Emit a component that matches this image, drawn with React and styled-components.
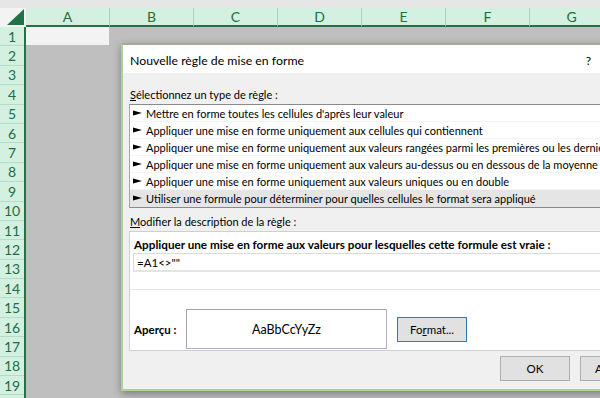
import React from 'react';
import styled, { createGlobalStyle } from 'styled-components';

const GlobalStyle = createGlobalStyle`
    html, body {
        margin: 0;
        padding: 0;
    }
    body {
        width: 600px;
        height: 398px;
        overflow: hidden;
        background: #bfbfbf;
    }
`;

const UI = '"Lato", "Noto Sans", "Liberation Sans", sans-serif';

const Screen = styled.div`
    position: relative;
    width: 600px;
    height: 398px;
    overflow: hidden;
    background: #bfbfbf;
    font-family: ${UI};
`;

const TopBand = styled.div`
    height: 8px;
    background: #e6e6e6;
`;

const HeaderRow = styled.div`
    display: flex;
    height: 19px;
`;

const Corner = styled.div`
    box-sizing: border-box;
    width: 26px;
    flex: none;
    display: flex;
    align-items: flex-end;
    justify-content: flex-end;
    padding: 0 2px 2px 0;
    background: #f3f3f3;
`;

const ColHeader = styled.div`
    box-sizing: border-box;
    width: 84px;
    flex: none;
    display: flex;
    align-items: center;
    justify-content: center;
    background: #d3f0e0;
    color: #1f6e43;
    font-size: 14px;
    border-right: 1px solid #a8d6bb;
    border-bottom: 2px solid #217346;
`;

const SheetBody = styled.div`
    display: flex;
    height: 371px;
`;

const RowHeaders = styled.div`
    box-sizing: border-box;
    width: 26px;
    flex: none;
    background: #d3f0e0;
    border-right: 2px solid #217346;
`;

const RowNum = styled.div`
    box-sizing: border-box;
    height: 19.4px;
    display: flex;
    align-items: center;
    justify-content: center;
    color: #1f6e43;
    font-size: 14px;
    border-bottom: 1px solid #b5dcc5;
`;

const Cells = styled.div`
    flex: 1;
    background: #bfbfbf;
`;

const ActiveCell = styled.div`
    width: 83px;
    height: 18px;
    background: #f3f3f3;
`;

const Dialog = styled.div`
    position: absolute;
    left: 121px;
    top: 43px;
    width: 540px;
    box-sizing: border-box;
    border: 2px solid #add199;
    border-top-color: #9eab96;
    background: #f0f0f0;
    box-shadow: 0 3px 8px rgba(0, 0, 0, 0.35);
    color: #000;
`;

const TitleBar = styled.div`
    height: 28px;
    display: flex;
    align-items: center;
    padding: 2px 0 0 7px;
    box-sizing: border-box;
    background: #fff;
    font-size: 12.3px;
`;

const Title = styled.div`
    flex: 1;
`;

const Help = styled.div`
    margin-right: 68px;
    font-size: 12px;
`;

const Content = styled.div`
    padding: 0 6px;
`;

const SectionLabel = styled.div`
    height: 16px;
    line-height: 16px;
    margin-top: ${(p) => p.$top}px;
    margin-bottom: 1px;
    padding-left: 1px;
    font-size: 11px;
`;

const ListBox = styled.div`
    border: 1px solid #8a8a8a;
    border-left-color: #a6a6a6;
    background: #fff;
    overflow: hidden;
`;

const ListItem = styled.div`
    box-sizing: border-box;
    height: 17px;
    display: flex;
    align-items: center;
    padding-left: 3px;
    white-space: nowrap;
    font-size: 11px;
    background: ${(p) => (p.$selected ? '#e5e5e5' : '#fff')};
    border-bottom: 1px solid ${(p) => (p.$selected ? '#e5e5e5' : '#f4f4f4')};
`;

const Pointer = styled.svg`
    flex: none;
    margin-right: 4px;
`;

const DescBox = styled.div`
    border: 1px solid #cfcfcf;
    background: #fff;
`;

const FormulaArea = styled.div`
    padding: 4px 0 17px 3px;
    border-bottom: 1px solid #e6e6e6;
`;

const BoldLine = styled.div`
    height: 16px;
    line-height: 16px;
    padding-left: 1px;
    font-size: 11.7px;
    font-weight: 700;
    white-space: nowrap;
`;

const FormulaInput = styled.div`
    box-sizing: border-box;
    height: 19px;
    margin-top: 1px;
    padding-left: 3px;
    display: flex;
    align-items: center;
    border: 1px solid #dadada;
    border-right: none;
    border-bottom: 2px solid #e4e4e4;
    font-size: 11.5px;
`;

const PreviewRow = styled.div`
    display: flex;
    align-items: center;
    padding: 19px 0 1px 4px;
`;

const PreviewLabel = styled.div`
    width: 52px;
    font-size: 11.5px;
    font-weight: 700;
`;

const PreviewBox = styled.div`
    box-sizing: border-box;
    width: 201px;
    height: 40px;
    display: flex;
    align-items: center;
    justify-content: center;
    border: 1px solid #b9accb;
    border-top-color: #a9a0b4;
    border-left-color: #a9a0b4;
    background: #fff;
    font-size: 12.5px;
`;

const Button = styled.div`
    box-sizing: border-box;
    width: 70px;
    height: 25px;
    display: flex;
    align-items: center;
    justify-content: center;
    background: #e1e1e1;
    border: 1px solid ${(p) => (p.$focused ? '#2f7cb7' : '#adadad')};
    margin-left: ${(p) => p.$offset || 0}px;
    font-size: 11.5px;
`;

const Footer = styled.div`
    display: flex;
    justify-content: flex-end;
    gap: 10px;
    padding: 5px 3px 8px 0;
`;

const columns = ['A', 'B', 'C', 'D', 'E', 'F', 'G'];
const rows = Array.from({ length: 19 }, (_, i) => i + 1);

const ruleTypes = [
    "Mettre en forme toutes les cellules d'après leur valeur",
    'Appliquer une mise en forme uniquement aux cellules qui contiennent',
    'Appliquer une mise en forme uniquement aux valeurs rangées parmi les premières ou les dernières',
    'Appliquer une mise en forme uniquement aux valeurs au-dessus ou en dessous de la moyenne',
    'Appliquer une mise en forme uniquement aux valeurs uniques ou en double',
    'Utiliser une formule pour déterminer pour quelles cellules le format sera appliqué',
];

function Arrow() {
    return (
        <Pointer width="9" height="6" viewBox="0 0 9 6">
            <polygon points="0,0.5 9,3 0,5.5" fill="#000" />
        </Pointer>
    );
}

function Sheet() {
    return (
        <>
            <TopBand />
            <HeaderRow>
                <Corner>
                    <svg width="17" height="16" viewBox="0 0 17 16">
                        <polygon points="17,0 17,16 0,16" fill="#217346" />
                    </svg>
                </Corner>
                {columns.map((c) => (
                    <ColHeader key={c}>{c}</ColHeader>
                ))}
            </HeaderRow>
            <SheetBody>
                <RowHeaders>
                    {rows.map((r) => (
                        <RowNum key={r}>{r}</RowNum>
                    ))}
                </RowHeaders>
                <Cells>
                    <ActiveCell />
                </Cells>
            </SheetBody>
        </>
    );
}

function RuleDialog() {
    return (
        <Dialog>
            <TitleBar>
                <Title>Nouvelle règle de mise en forme</Title>
                <Help>?</Help>
            </TitleBar>
            <Content>
                <SectionLabel $top={14}>
                    <u>S</u>électionnez un type de règle :
                </SectionLabel>
                <ListBox>
                    {ruleTypes.map((t, i) => (
                        <ListItem key={t} $selected={i === ruleTypes.length - 1}>
                            <Arrow />
                            {t}
                        </ListItem>
                    ))}
                </ListBox>
                <SectionLabel $top={6}>
                    <u>M</u>odifier la description de la règle :
                </SectionLabel>
                <DescBox>
                    <FormulaArea>
                        <BoldLine>
                            Appliquer une mise en forme aux valeurs pour lesquelles cette formule est vraie :
                        </BoldLine>
                        <FormulaInput>=A1&lt;&gt;""</FormulaInput>
                    </FormulaArea>
                    <PreviewRow>
                        <PreviewLabel>Aperçu :</PreviewLabel>
                        <PreviewBox>AaBbCcYyZz</PreviewBox>
                        <Button $focused $offset={10}>
                            Fo<u>r</u>mat...
                        </Button>
                    </PreviewRow>
                </DescBox>
                <Footer>
                    <Button>OK</Button>
                    <Button>Annuler</Button>
                </Footer>
            </Content>
        </Dialog>
    );
}

function App() {
    return (
        <Screen>
            <GlobalStyle />
            <Sheet />
            <RuleDialog />
        </Screen>
    );
}

export default App;
